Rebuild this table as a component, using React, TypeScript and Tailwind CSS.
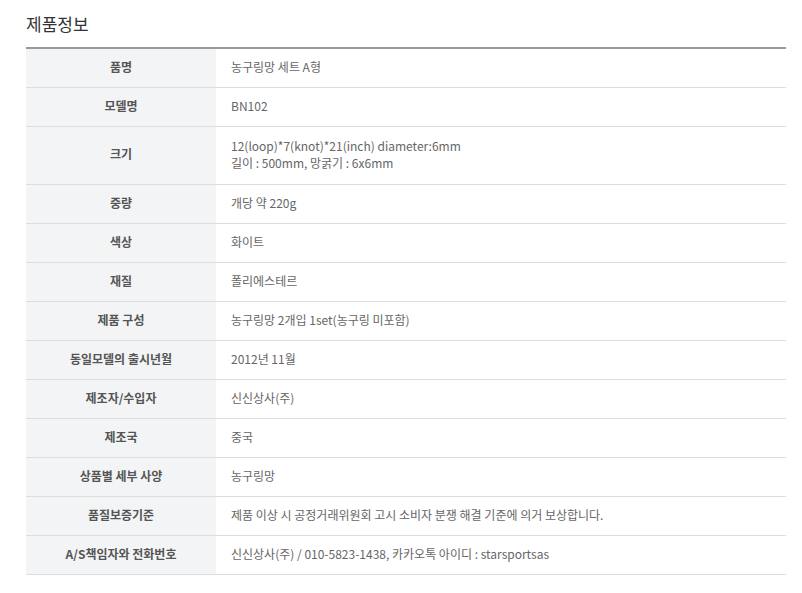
const rows: { label: string; value: string[]; tall?: boolean }[] = [
  { label: "품명", value: ["농구링망 세트 A형"] },
  { label: "모델명", value: ["BN102"] },
  {
    label: "크기",
    value: ["12(loop)*7(knot)*21(inch) diameter:6mm", "길이 : 500mm, 망굵기 : 6x6mm"],
    tall: true,
  },
  { label: "중량", value: ["개당 약 220g"] },
  { label: "색상", value: ["화이트"] },
  { label: "재질", value: ["폴리에스테르"] },
  { label: "제품 구성", value: ["농구링망 2개입 1set(농구링 미포함)"] },
  { label: "동일모델의 출시년월", value: ["2012년 11월"] },
  { label: "제조자/수입자", value: ["신신상사(주)"] },
  { label: "제조국", value: ["중국"] },
  { label: "상품별 세부 사양", value: ["농구링망"] },
  { label: "품질보증기준", value: ["제품 이상 시 공정거래위원회 고시 소비자 분쟁 해결 기준에 의거 보상합니다."] },
  { label: "A/S책임자와 전화번호", value: ["신신상사(주) / 010-5823-1438, 카카오톡 아이디 : starsportsas"] },
];

export default function App() {
  return (
    <div
      className="min-h-[593px] w-[802px] bg-white pl-[26px] pr-[16px] pt-[12px]"
      style={{ fontFamily: '"Noto Sans CJK KR", "Noto Sans", sans-serif' }}
    >
      <h2 className="h-[35px] text-[17px] leading-[24px] text-[#333]">제품정보</h2>
      <div className="border-t-2 border-[#999]">
        {rows.map((r) => (
          <div
            key={r.label}
            className={`flex border-b border-[#dddddd] ${r.tall ? "h-[58px]" : "h-[39px]"}`}
          >
            <div className="flex w-[190px] shrink-0 items-center justify-center bg-[#f3f4f6] pb-[3px] text-[12px] font-bold text-[#555]">
              {r.label}
            </div>
            <div className="flex flex-1 flex-col justify-center pb-[3px] pl-[15px] text-[12px] leading-[17px] text-[#666]">
              {r.value.map((v) => (
                <div key={v}>{v}</div>
              ))}
            </div>
          </div>
        ))}
      </div>
    </div>
  );
}
